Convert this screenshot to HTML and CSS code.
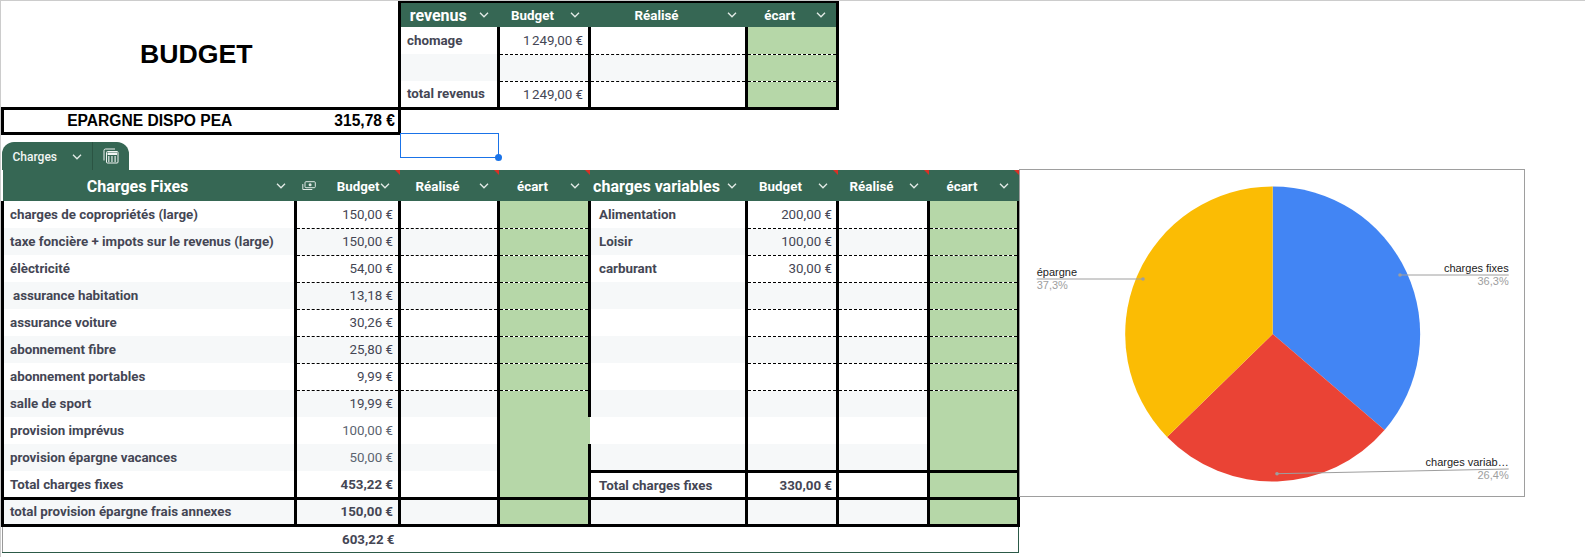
FILE: index.html
```html
<!DOCTYPE html>
<html lang="fr">
<head>
<meta charset="utf-8">
<title>Budget</title>
<link rel="stylesheet" href="styles.css">
</head>
<body>
<svg class="defs" width="0" height="0" aria-hidden="true">
  <symbol id="chev" viewBox="0 0 10 6"><path d="M1 .8 5 4.8 9 .8" fill="none" stroke="currentColor" stroke-width="1.3"/></symbol>
</svg>
<main class="sheet">
<table class="grid">
  <colgroup>
    <col class="c1"><col class="c2"><col class="c3"><col class="c4"><col class="c5"><col class="c6"><col class="c7"><col class="c8">
  </colgroup>
  <tbody>
    <tr class="r-top">
      <td class="title" colspan="2" rowspan="4">BUDGET</td>
      <th class="h rv-l rv-t"><div class="hd big"><span class="t">revenus</span><svg class="chev"><use href="#chev"/></svg></div></th>
      <th class="h rv-t"><div class="hd"><span class="t">Budget</span><svg class="chev"><use href="#chev"/></svg></div></th>
      <th class="h rv-t"><div class="hd"><span class="t">Réalisé</span><svg class="chev"><use href="#chev"/></svg></div></th>
      <th class="h rv-t rv-r"><div class="hd"><span class="t">écart</span><svg class="chev"><use href="#chev"/></svg></div></th>
    </tr>
    <tr class="r">
      <td class="v lab">chomage</td><td class="v num dash">1&#8239;249,00 €</td><td class="v dash"></td><td class="v green dash"></td>
    </tr>
    <tr class="r">
      <td class="v alt"></td><td class="v alt dash"></td><td class="v alt dash"></td><td class="v green dash"></td>
    </tr>
    <tr class="r">
      <td class="v lab b3">total revenus</td><td class="v num b3">1&#8239;249,00 €</td><td class="v b3"></td><td class="v green b3"></td>
    </tr>
    <tr class="r-pea">
      <td class="pea pea-l">EPARGNE DISPO PEA</td>
      <td class="pea pea-r">315,78 €</td>
    </tr>
    <tr class="r-sel">
      <td class="tabcell" colspan="2" rowspan="2">
        <div class="tab">
          <div class="tab-name"><span>Charges</span><svg class="chev"><use href="#chev"/></svg></div>
          <div class="tab-icon">
            <svg width="16" height="16" viewBox="0 0 16 16" fill="none" stroke="currentColor">
              <path d="M1 12.5V2.5a1.5 1.5 0 0 1 1.500-1.500H12"/>
              <rect x="3.500" y="3.500" width="11.500" height="11.500" rx="1"/>
              <rect x="4.500" y="4.500" width="9.500" height="2.500" fill="currentColor" stroke="none"/>
              <path d="M5 9h1.500M8.200 9h1.500M11.400 9h1.500M5 11h1.500M8.200 11h1.500M11.400 11h1.500M5 13h1.500M8.200 13h1.500M11.400 13h1.500" stroke-width="1.300"/>
            </svg>
          </div>
        </div>
      </td>
      <td class="sel"><div class="sel-box"><span class="sel-dot"></span></div></td>
    </tr>
    <tr class="r-gap"><td></td></tr>
    <tr class="r-head">
      <th class="h"><div class="hd big"><span class="t">Charges Fixes</span><svg class="chev"><use href="#chev"/></svg></div></th>
      <th class="h note"><div class="hd tight">
        <svg class="money" width="14" height="10" viewBox="0 0 14 10" fill="none" stroke="currentColor"><rect x="3" y=".7" width="10.300" height="6" rx="1"/><circle cx="8.100" cy="3.700" r="1.500" fill="currentColor" stroke="none"/><path d="M.8 3v5.500h9.500"/></svg>
        <span class="t">Budget</span><svg class="chev"><use href="#chev"/></svg></div></th>
      <th class="h note"><div class="hd"><span class="t">Réalisé</span><svg class="chev"><use href="#chev"/></svg></div></th>
      <th class="h note"><div class="hd"><span class="t">écart</span><svg class="chev"><use href="#chev"/></svg></div></th>
      <th class="h"><div class="hd big"><span class="t">charges variables</span><svg class="chev"><use href="#chev"/></svg></div></th>
      <th class="h note"><div class="hd"><span class="t">Budget</span><svg class="chev"><use href="#chev"/></svg></div></th>
      <th class="h note"><div class="hd"><span class="t">Réalisé</span><svg class="chev"><use href="#chev"/></svg></div></th>
      <th class="h note"><div class="hd"><span class="t">écart</span><svg class="chev"><use href="#chev"/></svg></div></th>
    </tr>
    <tr class="r">
      <td class="v lab">charges de copropriétés (large)</td><td class="v num dash">150,00 €</td><td class="v dash"></td><td class="v green dash"></td>
      <td class="v lab lab2">Alimentation</td><td class="v num n2 dash">200,00 €</td><td class="v dash"></td><td class="v green dash"></td>
    </tr>
    <tr class="r">
      <td class="v lab alt">taxe foncière + impots sur le revenus (large)</td><td class="v num alt dash">150,00 €</td><td class="v alt dash"></td><td class="v green dash"></td>
      <td class="v lab lab2 alt">Loisir</td><td class="v num n2 alt dash">100,00 €</td><td class="v alt dash"></td><td class="v green dash"></td>
    </tr>
    <tr class="r">
      <td class="v lab">élèctricité</td><td class="v num dash">54,00 €</td><td class="v dash"></td><td class="v green dash"></td>
      <td class="v lab lab2">carburant</td><td class="v num n2 dash">30,00 €</td><td class="v dash"></td><td class="v green dash"></td>
    </tr>
    <tr class="r">
      <td class="v lab alt"><span class="indent">assurance habitation</span></td><td class="v num alt dash">13,18 €</td><td class="v alt dash"></td><td class="v green dash"></td>
      <td class="v alt"></td><td class="v alt dash"></td><td class="v alt dash"></td><td class="v green dash"></td>
    </tr>
    <tr class="r">
      <td class="v lab">assurance voiture</td><td class="v num dash">30,26 €</td><td class="v dash"></td><td class="v green dash"></td>
      <td class="v"></td><td class="v dash"></td><td class="v dash"></td><td class="v green dash"></td>
    </tr>
    <tr class="r">
      <td class="v lab alt">abonnement fibre</td><td class="v num alt dash">25,80 €</td><td class="v alt dash"></td><td class="v green dash"></td>
      <td class="v alt"></td><td class="v alt dash"></td><td class="v alt dash"></td><td class="v green dash"></td>
    </tr>
    <tr class="r">
      <td class="v lab">abonnement portables</td><td class="v num dash">9,99 €</td><td class="v dash"></td><td class="v green dash"></td>
      <td class="v"></td><td class="v dash"></td><td class="v dash"></td><td class="v green dash"></td>
    </tr>
    <tr class="r">
      <td class="v lab alt">salle de sport</td><td class="v num alt">19,99 €</td><td class="v alt"></td><td class="v green"></td>
      <td class="v alt"></td><td class="v alt"></td><td class="v alt"></td><td class="v green"></td>
    </tr>
    <tr class="r">
      <td class="v lab">provision imprévus</td><td class="v num muted">100,00 €</td><td class="v"></td><td class="v green no-r"></td>
      <td class="v no-l"></td><td class="v"></td><td class="v"></td><td class="v green"></td>
    </tr>
    <tr class="r">
      <td class="v lab alt">provision épargne vacances</td><td class="v num muted alt">50,00 €</td><td class="v alt"></td><td class="v green"></td>
      <td class="v alt b3"></td><td class="v alt b3"></td><td class="v alt b3"></td><td class="v green b3"></td>
    </tr>
    <tr class="r r-low">
      <td class="v lab b3">Total charges fixes</td><td class="v tot b3">453,22 €</td><td class="v b3"></td><td class="v green b3"></td>
      <td class="v lab lab2 b3">Total charges fixes</td><td class="v tot n2 b3">330,00 €</td><td class="v b3"></td><td class="v green b3"></td>
    </tr>
    <tr class="r">
      <td class="v lab alt b3">total provision épargne frais annexes</td><td class="v tot alt b3">150,00 €</td><td class="v alt b3"></td><td class="v green b3"></td>
      <td class="v alt b3"></td><td class="v alt b3"></td><td class="v alt b3"></td><td class="v green b3"></td>
    </tr>
    <tr class="r">
      <td class="foot foot-l"></td><td class="foot tot">603,22 €</td><td class="foot foot-r" colspan="6"></td>
    </tr>
  </tbody>
</table>
<figure class="chart">
  <svg width="504" height="326" viewBox="0 0 504 326">
    <path d="M252.700 164V16.500A147.500 147.500 0 0 1 364.550 260.100Z" fill="#4285f4"/>
    <path d="M252.700 164 364.550 260.100A147.500 147.500 0 0 1 147.100 267Z" fill="#ea4335"/>
    <path d="M252.700 164 147.100 267A147.500 147.500 0 0 1 252.700 16.500Z" fill="#fbbc04"/>
    <g class="leader">
      <path d="M380 105H488.700"/>
      <path d="M16.700 109H123"/>
      <path d="M257 303.700 488.700 299"/>
    </g>
    <g class="dot">
      <circle cx="380" cy="105" r="1.800"/>
      <circle cx="123" cy="109" r="1.800"/>
      <circle cx="257" cy="303.700" r="1.800"/>
    </g>
    <text class="lbl end" x="488.700" y="101.500">charges fixes</text>
    <text class="val end" x="488.700" y="115">36,3%</text>
    <text class="lbl" x="16.700" y="106">épargne</text>
    <text class="val" x="16.700" y="119">37,3%</text>
    <text class="lbl end" x="488.700" y="295.500">charges variab…</text>
    <text class="val end" x="488.700" y="309">26,4%</text>
  </svg>
</figure>
</main>
</body>
</html>
```
FILE: styles.css
```css
* { box-sizing: border-box; }
html, body { margin: 0; padding: 0; }
body {
  height: 557px;
  overflow: hidden;
  background: #fff;
  border-top: 1px solid #ccc;
  border-left: 1px solid #ccc;
  font-family: Roboto, "Liberation Sans", sans-serif;
  color: #444654;
}
.defs { position: absolute; }
.sheet { display: flex; align-items: flex-start; }

.grid {
  border-collapse: collapse;
  table-layout: fixed;
  width: 1016px;
  flex: none;
  font-size: 13.33px;
}
.c1 { width: 293px; }
.c2 { width: 104px; }
.c3 { width: 99px; }
.c4 { width: 91px; }
.c5 { width: 157px; }
.c6 { width: 91px; }
.c7 { width: 91px; }
.c8 { width: 90px; }

td, th { padding: 0; overflow: hidden; white-space: nowrap; }
.r-top { height: 25px; }
.r { height: 27px; }
.r-pea { height: 25px; }
.r-sel { height: 25px; }
.r-gap { height: 12px; }
.r-head { height: 31px; }
.r-head .hd { padding-top: 1px; }
.r-low td { padding-top: 1px; }

.title {
  font: bold 26.67px "Liberation Sans", Arial, sans-serif;
  color: #000;
  text-align: center;
  padding-right: 8px;
}
.pea {
  font: bold 15.6px "Liberation Sans", Arial, sans-serif;
  color: #000;
  border-top: 3px solid #000;
  border-bottom: 3px solid #000;
  padding-top: 1px;
}
.pea-l { text-align: center; border-left: 3px solid #000; }
.pea-r { text-align: right; padding-right: 3px; border-right: 3px solid #000; }

.h { background: #366754; color: #fff; font-weight: bold; position: relative; }
.rv-t { border-top: 2px solid #000; }
.rv-l { border-left: 3px solid #000; }
.rv-r { border-right: 3px solid #000; }
.note::after {
  content: "";
  position: absolute;
  top: 0;
  right: 0;
  border-top: 5px solid #d93025;
  border-left: 5px solid transparent;
}
.hd { display: flex; align-items: center; padding-right: 10px; }
.hd .t { flex: 1; text-align: center; }
.big .t { font-size: 16px; }
.chev { width: 10px; height: 6px; margin-left: 3px; flex: none; color: #e4ece8; }
.tight { padding-left: 5px; }
.tight .t { text-align: right; }
.tight .chev { margin-left: 0; }
.money { flex: none; color: #dfe8e4; margin-left: 1px; }

.v { border-left: 3px solid #000; border-right: 3px solid #000; background: #fff; }
.alt { background: #f6f8f9; }
.green { background: #b6d7a8; }
.dash { border-bottom: 1px dashed #000; }
.b3 { border-bottom: 3px solid #000; }
.no-r { border-right-style: hidden; }
.no-l { border-left-style: hidden; }
.lab { font-weight: bold; padding-left: 6px; }
.lab2 { padding-left: 8px; }
.indent { padding-left: 3px; }
.num { text-align: right; padding-right: 5px; }
.tot { text-align: right; padding-right: 5px; font-weight: bold; }
.n2 { padding-right: 4px; }
.muted { color: #5b6470; }

.tabcell { vertical-align: bottom; overflow: visible; }
.tab {
  display: flex;
  width: 127px;
  height: 28px;
  margin-left: -1px;
  background: #366754;
  color: #f1f5f3;
  border-radius: 12px 12px 0 0;
  font-size: 12px;
  font-weight: 500;
}
.tab-name {
  display: flex;
  align-items: center;
  justify-content: space-between;
  width: 91px;
  padding: 1px 10px 0 11px;
  border-right: 1px solid #2b5443;
}
.tab-name .chev { margin: 0; }
.tab-icon { flex: 1; display: flex; align-items: center; justify-content: center; }

.sel { position: relative; overflow: visible; }
.sel-box {
  position: absolute;
  inset: 0;
  border: 1px solid #1a73e8;
}
.sel-dot {
  position: absolute;
  right: -4px;
  bottom: -4px;
  width: 7px;
  height: 7px;
  border-radius: 50%;
  background: #1a73e8;
}

.foot-l { border-left: 1px solid #999; }
.foot { border-bottom: 1px solid #2c5a48; }
.foot-r { border-right: 1px solid #2c5a48; }

.chart {
  flex: none;
  margin: 168px 0 0 -1px;
  width: 506px;
  height: 328px;
  border: 1px solid #9e9e9e;
  background: #fff;
  position: relative;
}
.chart svg { display: block; }
.leader path { fill: none; stroke: #9e9e9e; stroke-width: 1; }
.dot circle { fill: #9e9e9e; }
.lbl, .val { font: 11px "Liberation Sans", Arial, sans-serif; }
.lbl { fill: #222; }
.val { fill: #9e9e9e; }
.end { text-anchor: end; }
```
